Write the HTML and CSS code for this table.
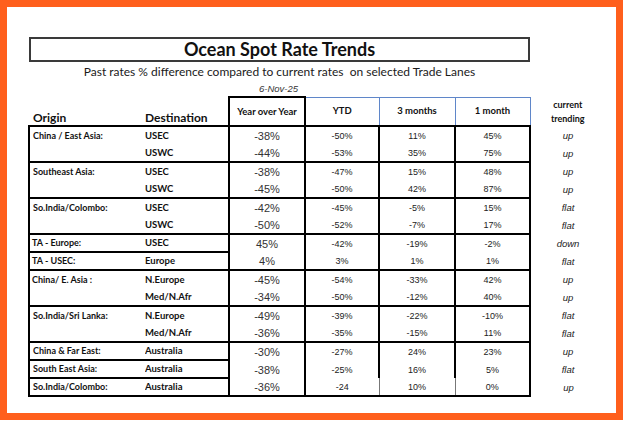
FILE: index.html
```html
<!DOCTYPE html>
<html lang="en">
<head>
<meta charset="utf-8">
<title>Ocean Spot Rate Trends</title>
<link rel="stylesheet" href="styles.css">
</head>
<body>
<div class="frame">
  <div class="title">Ocean Spot Rate Trends</div>
  <div class="subtitle">Past rates % difference compared to current rates&nbsp; on selected Trade Lanes</div>
  <div class="date">6-Nov-25</div>
  <table class="rates">
    <colgroup>
      <col class="c-o"><col class="c-d"><col class="c-y"><col class="c-ytd"><col class="c-3"><col class="c-1"><col class="c-t">
    </colgroup>
    <thead>
      <tr class="head">
        <th class="h-o">Origin</th>
        <th class="h-d">Destination</th>
        <th class="h-y">Year over Year</th>
        <th class="h-b">YTD</th>
        <th class="h-b">3 months</th>
        <th class="h-b h-last">1 month</th>
        <th class="h-t">current<br>trending</th>
      </tr>
    </thead>
    <tbody>
      <tr><td class="o">China / East Asia:</td><td class="d">USEC</td><td class="y">-38%</td><td class="v">-50%</td><td class="v">11%</td><td class="v m">45%</td><td class="t">up</td></tr>
      <tr class="g"><td class="o"></td><td class="d">USWC</td><td class="y">-44%</td><td class="v">-53%</td><td class="v">35%</td><td class="v m">75%</td><td class="t">up</td></tr>
      <tr><td class="o">Southeast Asia:</td><td class="d">USEC</td><td class="y">-38%</td><td class="v">-47%</td><td class="v">15%</td><td class="v m">48%</td><td class="t">up</td></tr>
      <tr class="g"><td class="o"></td><td class="d">USWC</td><td class="y">-45%</td><td class="v">-50%</td><td class="v">42%</td><td class="v m">87%</td><td class="t">up</td></tr>
      <tr><td class="o">So.India/Colombo:</td><td class="d">USEC</td><td class="y">-42%</td><td class="v">-45%</td><td class="v">-5%</td><td class="v m">15%</td><td class="t">flat</td></tr>
      <tr class="g"><td class="o"></td><td class="d">USWC</td><td class="y">-50%</td><td class="v">-52%</td><td class="v">-7%</td><td class="v m">17%</td><td class="t">flat</td></tr>
      <tr class="l"><td class="o in">TA - Europe:</td><td class="d">USEC</td><td class="y">45%</td><td class="v">-42%</td><td class="v">-19%</td><td class="v m">-2%</td><td class="t">down</td></tr>
      <tr class="g"><td class="o in">TA - USEC:</td><td class="d">Europe</td><td class="y">4%</td><td class="v">3%</td><td class="v">1%</td><td class="v m">1%</td><td class="t">flat</td></tr>
      <tr><td class="o in">China/ E. Asia :</td><td class="d">N.Europe</td><td class="y">-45%</td><td class="v">-54%</td><td class="v">-33%</td><td class="v m">42%</td><td class="t">up</td></tr>
      <tr class="g"><td class="o"></td><td class="d">Med/N.Afr</td><td class="y">-34%</td><td class="v">-50%</td><td class="v">-12%</td><td class="v m">40%</td><td class="t">up</td></tr>
      <tr><td class="o">So.India/Sri Lanka:</td><td class="d">N.Europe</td><td class="y">-49%</td><td class="v">-39%</td><td class="v">-22%</td><td class="v m">-10%</td><td class="t">flat</td></tr>
      <tr class="g"><td class="o"></td><td class="d">Med/N.Afr</td><td class="y">-36%</td><td class="v">-35%</td><td class="v">-15%</td><td class="v m">11%</td><td class="t">flat</td></tr>
      <tr class="l"><td class="o">China &amp; Far East:</td><td class="d">Australia</td><td class="y">-30%</td><td class="v">-27%</td><td class="v">24%</td><td class="v m">23%</td><td class="t">up</td></tr>
      <tr class="l"><td class="o">South East Asia:</td><td class="d">Australia</td><td class="y">-38%</td><td class="v">-25%</td><td class="v">16%</td><td class="v m">5%</td><td class="t">flat</td></tr>
      <tr class="g last"><td class="o">So.India/Colombo:</td><td class="d">Australia</td><td class="y">-36%</td><td class="v thin">-24</td><td class="v thin">10%</td><td class="v m">0%</td><td class="t">up</td></tr>
    </tbody>
  </table>
</div>
</body>
</html>
```
FILE: styles.css
```css
html, body {
  margin: 0;
  padding: 0;
  background: #ffffff;
}

.frame {
  box-sizing: border-box;
  width: 623px;
  height: 420px;
  border: 7px solid #ff5f1c;
  padding: 30px 0 0 22px;
  background: #ffffff;
  font-family: Lato, "Liberation Sans", sans-serif;
  color: #111;
}

.title {
  box-sizing: border-box;
  width: 501px;
  height: 25px;
  border: 2px solid #3a3a3a;
  font-weight: 700;
  font-size: 18px;
  line-height: 21px;
  text-align: center;
  color: #111;
}

.subtitle {
  width: 501px;
  margin-top: 2px;
  font-size: 12px;
  line-height: 16px;
  text-align: center;
  color: #1a1a1a;
}

.date {
  margin: 3px 0 0 230px;
  font-family: "Liberation Sans", Arial, sans-serif;
  font-style: italic;
  font-size: 9.5px;
  line-height: 12px;
  height: 13px;
  color: #333;
}

.rates {
  border-collapse: collapse;
  table-layout: fixed;
  width: 577px;
  margin-left: -1px;
}

.c-o { width: 116px; }
.c-d { width: 84px; }
.c-y { width: 76px; }
.c-ytd { width: 74px; }
.c-3 { width: 76px; }
.c-1 { width: 75px; }
.c-t { width: 76px; }

.rates th, .rates td {
  padding: 0;
  white-space: nowrap;
  overflow: hidden;
}

.head th {
  height: 27px;
  font-weight: 700;
  font-size: 9.5px;
  line-height: 12px;
  vertical-align: middle;
  text-align: center;
  color: #111;
  border-bottom: 2px solid #000;
}

.head .h-o, .head .h-d {
  font-size: 12px;
  text-align: left;
  vertical-align: bottom;
  padding-bottom: 1px;
}
.head .h-o { padding-left: 4px; }
.head .h-d { padding-left: 0; }

.head .h-y {
  border: 2px solid #000;
}

.head .h-b {
  border-top: 1px solid #5f86c9;
  border-right: 1px solid #5f86c9;
}

.head .h-t {
  border-bottom: none;
  font-size: 9px;
  line-height: 14px;
}

.rates tbody tr {
  height: 18px;
}

.rates td {
  vertical-align: bottom;
  padding-bottom: 2px;
  line-height: 12px;
}

td.o {
  border-left: 2px solid #000;
  padding-left: 3px;
  font-weight: 700;
  font-size: 9px;
  color: #111;
}
td.o.in { padding-left: 2px; }

td.d {
  font-weight: 700;
  font-size: 9.5px;
  color: #111;
}

td.y {
  border-left: 2px solid #000;
  border-right: 2px solid #000;
  text-align: center;
  font-family: "Liberation Sans", Arial, sans-serif;
  font-size: 11px;
  color: #333;
}

td.v {
  border-right: 2px solid #000;
  text-align: center;
  font-family: "Liberation Sans", Arial, sans-serif;
  font-size: 9px;
  color: #222;
}

td.v.thin {
  border-right: 1px solid #777;
}

td.t {
  text-align: center;
  font-family: "Liberation Sans", Arial, sans-serif;
  font-style: italic;
  font-size: 9.5px;
  color: #222;
}

tr.g td:not(.t) {
  border-bottom: 2px solid #000;
}

tr.l td.o, tr.l td.d {
  border-bottom: 2px solid #000;
}
```
